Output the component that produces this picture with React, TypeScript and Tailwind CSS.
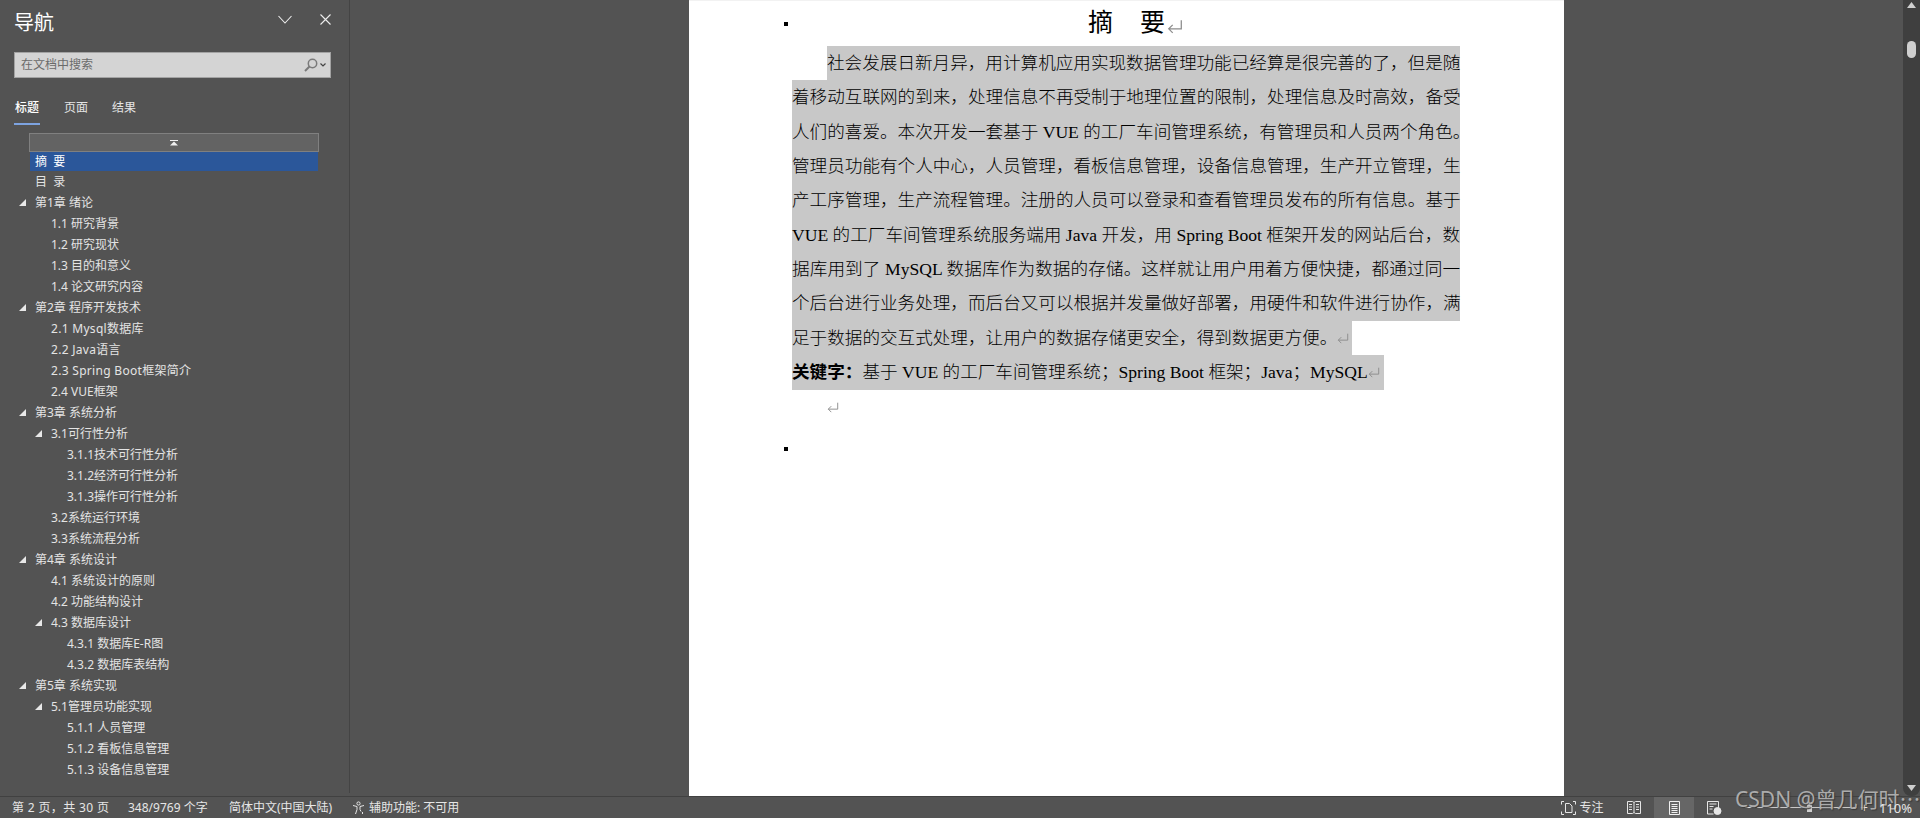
const uiFont = { fontFamily: '"Noto Sans", "Noto Sans CJK SC", sans-serif' }
const docFont = { fontFamily: '"Liberation Serif", "Noto Sans CJK SC", serif' }

type Row = { label: string; level: 1 | 2 | 3; open?: boolean; selected?: boolean; wide?: boolean }

const rows: Row[] = [
  { label: '摘  要', level: 1, selected: true },
  { label: '目  录', level: 1 },
  { label: '第1章 绪论', level: 1, open: true },
  { label: '1.1 研究背景', level: 2 },
  { label: '1.2 研究现状', level: 2 },
  { label: '1.3 目的和意义', level: 2 },
  { label: '1.4 论文研究内容', level: 2 },
  { label: '第2章 程序开发技术', level: 1, open: true },
  { label: '2.1 Mysql数据库', level: 2, wide: true },
  { label: '2.2 Java语言', level: 2, wide: true },
  { label: '2.3 Spring Boot框架简介', level: 2, wide: true },
  { label: '2.4 VUE框架', level: 2 },
  { label: '第3章 系统分析', level: 1, open: true },
  { label: '3.1可行性分析', level: 2, open: true },
  { label: '3.1.1技术可行性分析', level: 3 },
  { label: '3.1.2经济可行性分析', level: 3 },
  { label: '3.1.3操作可行性分析', level: 3 },
  { label: '3.2系统运行环境', level: 2 },
  { label: '3.3系统流程分析', level: 2 },
  { label: '第4章 系统设计', level: 1, open: true },
  { label: '4.1 系统设计的原则', level: 2 },
  { label: '4.2 功能结构设计', level: 2 },
  { label: '4.3 数据库设计', level: 2, open: true },
  { label: '4.3.1 数据库E-R图', level: 3 },
  { label: '4.3.2 数据库表结构', level: 3 },
  { label: '第5章 系统实现', level: 1, open: true },
  { label: '5.1管理员功能实现', level: 2, open: true },
  { label: '5.1.1 人员管理', level: 3 },
  { label: '5.1.2 看板信息管理', level: 3 },
  { label: '5.1.3 设备信息管理', level: 3 },
]

const lines = [
  '着移动互联网的到来，处理信息不再受制于地理位置的限制，处理信息及时高效，备受',
  '人们的喜爱。本次开发一套基于 VUE 的工厂车间管理系统，有管理员和人员两个角色。',
  '管理员功能有个人中心，人员管理，看板信息管理，设备信息管理，生产开立管理，生',
  '产工序管理，生产流程管理。注册的人员可以登录和查看管理员发布的所有信息。基于',
  'VUE 的工厂车间管理系统服务端用 Java 开发，用 Spring Boot 框架开发的网站后台，数',
  '据库用到了 MySQL 数据库作为数据的存储。这样就让用户用着方便快捷，都通过同一',
  '个后台进行业务处理，而后台又可以根据并发量做好部署，用硬件和软件进行协作，满',
]

function ReturnMark({ size = 14 }: { size?: number }) {
  return (
    <svg width={size} height={size} viewBox="0 0 14 14" className="inline-block flex-shrink-0" fill="none" stroke="#8c8c8c" strokeWidth="1.1">
      <path d="M12.5 2v7.5H1.5M5 6 1.5 9.5 5 13" />
    </svg>
  )
}

function Caret() {
  return (
    <svg width="7" height="7" viewBox="0 0 7 7" className="flex-shrink-0">
      <path d="M0 7 7 0v7z" fill="#e8e8e8" />
    </svg>
  )
}

function TreeRow({ row }: { row: Row }) {
  if (row.selected) {
    return (
      <div className="ml-[30px] mr-[31px] pl-[5px] h-[19px] flex items-center whitespace-pre text-[12px] bg-[#2b579a] text-white">
        {row.label}
      </div>
    )
  }
  const indent = row.level === 1 ? 'pl-[19px]' : row.level === 2 ? 'pl-[35px]' : 'pl-[51px]'
  return (
    <div className={`h-[21px] flex items-center whitespace-pre text-[12px] text-[#e4e4e4] ${indent}`}>
      <span className="w-[16px] flex-shrink-0">{row.open && <Caret />}</span>
      <span className={row.wide ? 'tracking-[0.3px]' : ''}>{row.label}</span>
    </div>
  )
}

function Sidebar() {
  return (
    <aside className="w-[350px] flex-shrink-0 h-[793px] border-r border-[#444444] overflow-hidden" style={uiFont}>
      <div className="flex items-center h-[32px] pt-[6px] pl-[14px] pr-[18px]">
        <span className="text-[20px] text-white flex-1 leading-none pt-[8px]">导航</span>
        <svg width="14" height="9" viewBox="0 0 14 9" fill="none" stroke="#eeeeee" strokeWidth="1.1" className="mr-[28px]">
          <path d="M0.5 1 7 8l6.5-7" />
        </svg>
        <svg width="11" height="11" viewBox="0 0 11 11" fill="none" stroke="#eeeeee" strokeWidth="1.1">
          <path d="M0.5 0.5l10 10M10.5 0.5l-10 10" />
        </svg>
      </div>
      <div className="mt-[20px] ml-[14px] w-[317px] h-[26px] bg-[#d4d4d4] border border-[#a3a3a3] flex items-center pl-[6px] pr-[4px]">
        <span className="text-[12px] text-[#6b6b6b] flex-1">在文档中搜索</span>
        <svg width="14" height="14" viewBox="0 0 14 14" fill="none" stroke="#7a7a7a" strokeWidth="1.5">
          <circle cx="8.5" cy="5.5" r="4.2" />
          <path d="M5.5 8.5 1 13" strokeWidth="2" />
        </svg>
        <svg width="6" height="4" viewBox="0 0 6 4" className="ml-[2px]" fill="none" stroke="#444444" strokeWidth="1.2">
          <path d="M0.5 0.5 3 3l2.5-2.5" />
        </svg>
      </div>
      <div className="mt-[20px] ml-[14px] flex gap-[24px] text-[12px] h-[27px]">
        <span className="relative w-[26px] text-center font-medium text-white leading-[20px]">
          标题
          <span className="absolute left-0 bottom-0 w-[26px] h-[2px] bg-[#7da3e0]" />
        </span>
        <span className="text-[#e4e4e4] leading-[20px]">页面</span>
        <span className="text-[#e4e4e4] leading-[20px]">结果</span>
      </div>
      <div className="mt-[8px] ml-[29px] w-[290px] h-[19px] bg-[#636363] border border-[#808080] flex items-center justify-center">
        <svg width="8" height="6" viewBox="0 0 8 6">
          <path d="M0 0h8v1H0zM4 1.5 8 5.5H0z" fill="#f0f0f0" />
        </svg>
      </div>
      <div>
        {rows.map((r) => (
          <TreeRow key={r.label} row={r} />
        ))}
      </div>
    </aside>
  )
}

function Page() {
  return (
    <div className="w-[875px] h-[797px] bg-white relative border-t border-[#f2f2f2]">
      <span className="absolute left-[95px] top-[21px] w-[4px] h-[4px] bg-black" />
      <span className="absolute left-[95px] top-[446px] w-[4px] h-[4px] bg-black" />
      <div className="pl-[103px] w-[771px] text-[17.6px] font-light text-black" style={docFont}>
        <div className="h-[45px] flex items-start pl-[296px] pt-[7px] text-[25px] font-normal leading-[30px] text-black">
          <span>摘</span>
          <span className="ml-[27px]">要</span>
          <span className="mt-[1px] ml-[2px]"><ReturnMark size={16} /></span>
        </div>
        <div className="ml-[35px] h-[34.33px] leading-[34.33px] bg-[#c8c8c8] [text-align-last:justify] whitespace-nowrap">
          社会发展日新月异，用计算机应用实现数据管理功能已经算是很完善的了，但是随
        </div>
        {lines.map((l) => (
          <div key={l} className="h-[34.33px] leading-[34.33px] bg-[#c8c8c8] [text-align-last:justify] whitespace-nowrap">
            {l}
          </div>
        ))}
        <div className="w-[560px] h-[34.33px] leading-[34.33px] bg-[#c8c8c8] flex items-center whitespace-nowrap">
          足于数据的交互式处理，让用户的数据存储更安全，得到数据更方便。
          <ReturnMark size={12} />
        </div>
        <div className="w-[592px] h-[35px] leading-[35px] bg-[#c8c8c8] flex items-center whitespace-pre">
          <b className="font-bold text-black">关键字：</b>基于 VUE 的工厂车间管理系统；Spring Boot 框架；Java；MySQL
          <ReturnMark size={12} />
        </div>
        <div className="ml-[35px] h-[34px] flex items-center">
          <ReturnMark size={12} />
        </div>
      </div>
    </div>
  )
}

function Scrollbar() {
  return (
    <div className="w-[17px] h-[796px] flex-shrink-0 bg-[#3f3f3f] rounded-b-[8px] flex flex-col items-center pt-[2px]">
      <svg width="9" height="6" viewBox="0 0 9 6"><path d="M4.5 0 9 6H0z" fill="#cfcfcf" /></svg>
      <div className="mt-[33px] w-[9px] h-[17px] rounded-[5px] bg-[#cfcfcf]" />
      <div className="flex-1" />
      <svg width="9" height="6" viewBox="0 0 9 6" className="mb-[5px]"><path d="M0 0h9L4.5 6z" fill="#cfcfcf" /></svg>
    </div>
  )
}

function StatusBar() {
  return (
    <footer className="relative h-[22px] flex-shrink-0 border-t border-[#414141] bg-[#535353] flex items-center text-[12px] text-[#e6e6e6] whitespace-pre" style={uiFont}>
      <span className="ml-[12px] w-[116px] tracking-[0.35px]">第 2 页，共 30 页</span>
      <span className="w-[101px]">348/9769 个字</span>
      <span className="w-[123px]">简体中文(中国大陆)</span>
      <svg width="14" height="14" viewBox="0 0 14 14" fill="none" stroke="#e6e6e6" strokeWidth="1" className="mr-[3px]">
        <circle cx="6.5" cy="2.5" r="1.6" />
        <path d="M1 4.5l4 1v3L3.5 13M12 4.5l-4 1v3l1 2" />
        <path d="M10.5 11v2" />
      </svg>
      <span>辅助功能: 不可用</span>
      <div className="flex-1" />
      <svg width="15" height="14" viewBox="0 0 15 14" fill="none" stroke="#e6e6e6" strokeWidth="1" className="mr-[3px]">
        <path d="M3 0.5H0.5v3M12 0.5h2.5v3M3 13.5H0.5v-3M12 13.5h2.5v-3M4.5 2.5h4l2.5 2.5v6.5H4.5z" />
      </svg>
      <span className="w-[48px]">专注</span>
      <svg width="14" height="13" viewBox="0 0 14 13" fill="none" stroke="#e6e6e6" strokeWidth="1" className="mr-[13px]">
        <path d="M0.5 0.5h5l1.5 1 1.5-1h5v12h-5L7 11.5 5.5 12.5h-5zM7 1.5v10M2 3.5h3M2 6h3M2 8.5h3M9 3.5h3M9 6h3M9 8.5h3" />
      </svg>
      <div className="w-[40px] h-[21px] bg-[#666666] flex items-center justify-center mr-[13px]">
        <svg width="11" height="14" viewBox="0 0 11 14" fill="none" stroke="#f0f0f0" strokeWidth="1">
          <path d="M0.5 0.5h10v13H0.5zM2.5 3.5h6M2.5 5.5h6M2.5 7.5h6M2.5 9.5h6M2.5 11.5h6" />
        </svg>
      </div>
      <svg width="15" height="14" viewBox="0 0 15 14" fill="none" stroke="#e6e6e6" strokeWidth="1" className="mr-[23px]">
        <path d="M0.5 0.5h11v7M0.5 0.5v12.5h6M2.5 3h7M2.5 5.5h4M2.5 8h3" />
        <circle cx="10.5" cy="10" r="3.5" fill="#e6e6e6" />
      </svg>
      <span className="w-[10px] h-px bg-[#e6e6e6]" />
      <span className="relative w-[100px] h-px bg-[#c8c8c8] ml-[2px]">
        <span className="absolute left-[50px] -top-[5px] w-[5px] h-[10px] bg-[#cfcfcf]" />
      </span>
      <span className="ml-[3px] text-[13px] leading-none">+</span>
      <span className="relative z-10 ml-[11px] mr-[8px] pt-[2px] text-[13px]">110%</span>
      <span className="absolute left-[1735px] -top-[12px] text-[21px] leading-[26px] text-[#ababab] [text-shadow:1px_1px_1px_#3a3a3a]">
        CSDN @曾几何时<span className="font-['Noto_Sans_CJK_SC']">…</span>
      </span>
    </footer>
  )
}

export default function App() {
  return (
    <div className="w-[1920px] h-[818px] bg-[#535353] flex flex-col overflow-hidden">
      <div className="flex-1 flex min-h-0">
        <Sidebar />
        <main className="flex-1 flex justify-center min-w-0">
          <Page />
        </main>
        <Scrollbar />
      </div>
      <StatusBar />
    </div>
  )
}
